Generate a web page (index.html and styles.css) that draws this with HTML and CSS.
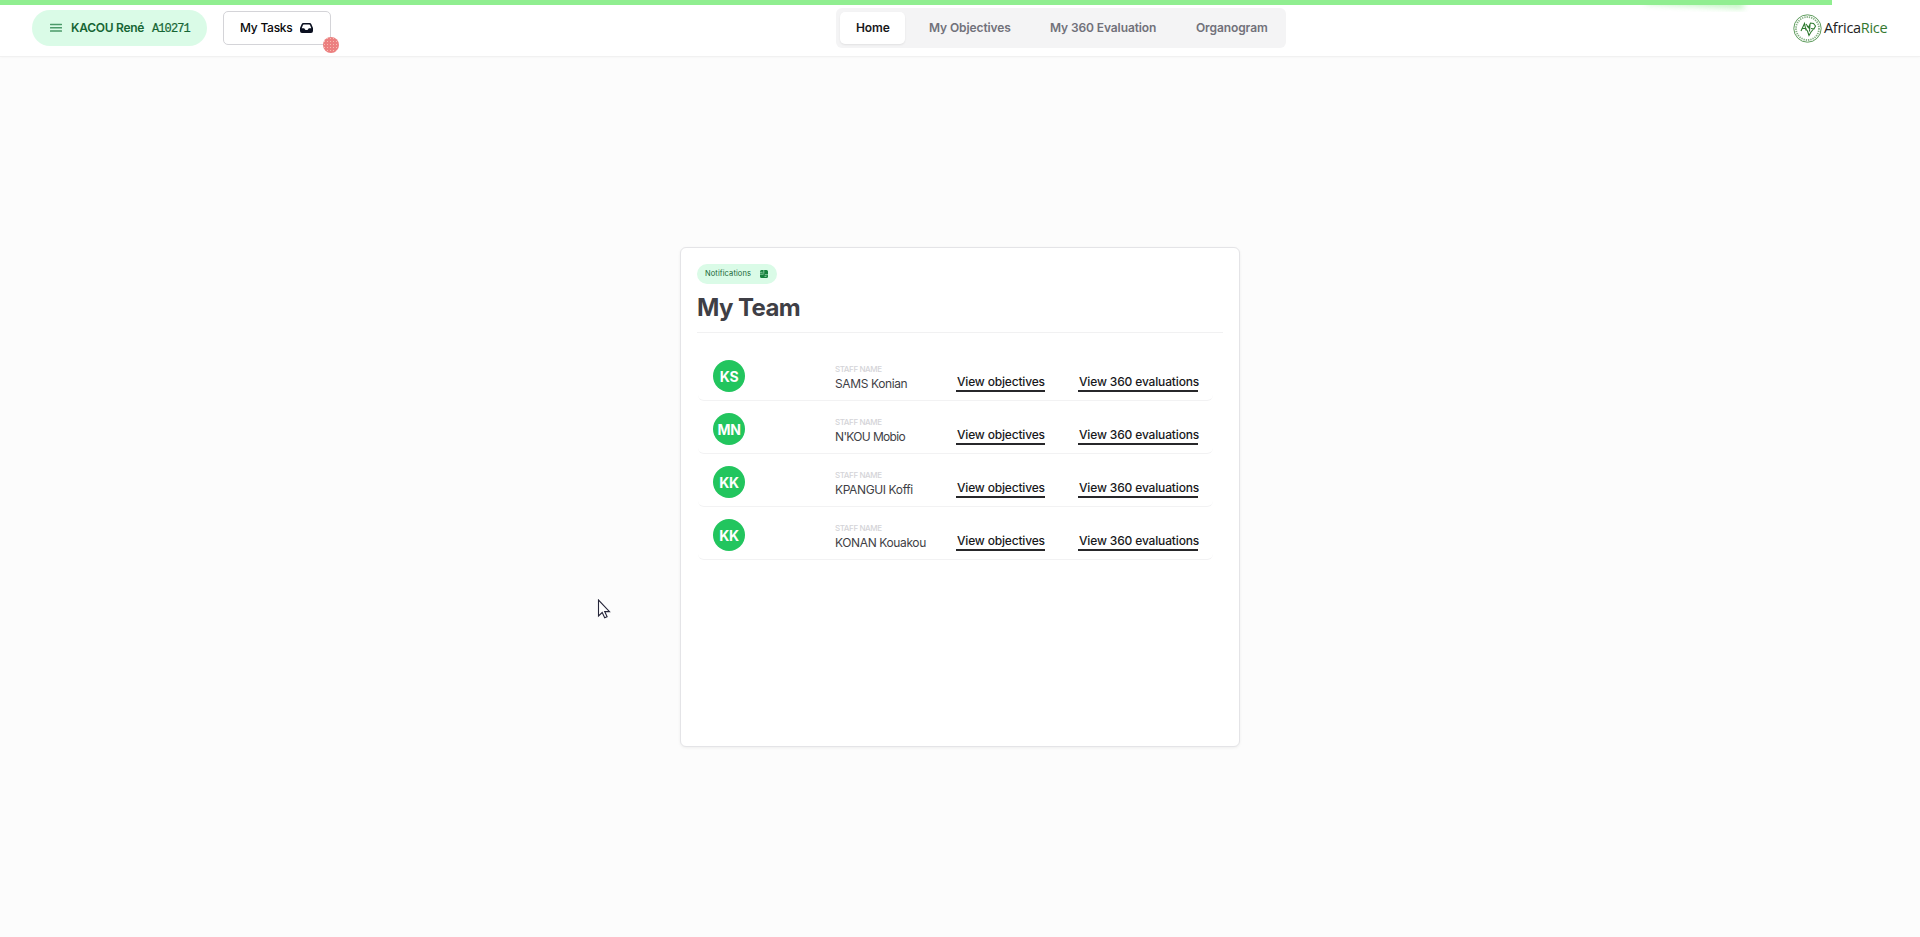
FILE: index.html
```html
<!DOCTYPE html>
<html lang="en">
<head>
<meta charset="utf-8">
<title>AfricaRice</title>
<link rel="stylesheet" href="styles.css">
</head>
<body>
<div class="progress"><div class="progress-bar"></div><div class="progress-peg"></div></div>
<header class="header">
  <div class="header-left">
    <button class="profile">
      <svg class="menu-icon" width="12" height="10" viewBox="0 0 12 10"><path d="M.5 1.500h11M.5 4.800h11M.5 8.100h11" stroke="#4b9a6a" stroke-width="1.500" stroke-linecap="round"/></svg>
      <span class="profile-name">KACOU René</span>
      <span class="profile-id">A10271</span>
    </button>
    <button class="tasks">
      <span class="tasks-label">My Tasks</span>
      <svg width="13" height="10" viewBox="0 0 13 10"><path fill="#0b1020" fill-rule="evenodd" d="M3.500 0h6a2 2 0 0 1 1.900 1.300L13 5v3a2 2 0 0 1-2 2H2a2 2 0 0 1-2-2V5l1.600-3.700A2 2 0 0 1 3.500 0Zm.2 1.400a.8.8 0 0 0-.7.500L1.700 5.200h2c.5 0 .8.200 1 .6l.3.700c.1.300.4.500.7.500h1.600c.3 0 .6-.2.700-.5l.3-.7c.2-.4.500-.6 1-.6h2L10 1.900a.8.8 0 0 0-.7-.5Z"/></svg>
      <span class="tasks-dot"></span>
    </button>
  </div>
  <nav class="tabs">
    <a class="tab tab-active">Home</a>
    <a class="tab tab-objectives">My Objectives</a>
    <a class="tab tab-evaluation">My 360 Evaluation</a>
    <a class="tab tab-organogram">Organogram</a>
  </nav>
  <div class="logo">
    <svg width="29" height="29" viewBox="0 0 29 29" fill="none">
      <circle cx="14.500" cy="14.500" r="13.700" stroke="#4c914b" stroke-width=".9"/>
      <circle cx="14.500" cy="14.500" r="11.500" stroke="#3f873e" stroke-width="1.800" stroke-dasharray="1.300 1" opacity=".65"/>
      <path d="M8 17l3.500-7.500 1.500 7M9.500 14.500h4M13 10l2.500 3.500 2-4.500 3 .5 2 2.500-1.500 3-3-.5M12 14l2.500 3 1.500 4.500 2-3.500 3-3.500M17 10.500l-.5 7M14 12l3 3" stroke="#2f7b30" stroke-width="1.100"/>
    </svg>
    <span class="logo-text">Africa<span class="logo-rice">Rice</span></span>
  </div>
</header>
<main class="main">
  <section class="card">
    <div class="badge">
      <span>Notifications</span>
      <svg width="8" height="8" viewBox="0 0 8 8"><path fill="#15803d" d="M1.500 0h5A1.500 1.500 0 0 1 8 1.500v5A1.500 1.500 0 0 1 6.500 8h-5A1.500 1.500 0 0 1 0 6.500v-5A1.500 1.500 0 0 1 1.500 0Z"/><path d="M0 2.300h2.500M3.800 0v3.600M0 4.200h3.600M4.800 4.700H8M4.500 6.400H6.500" stroke="#b5e8c6" stroke-width=".7" fill="none"/></svg>
    </div>
    <h1 class="title">My Team</h1>
    <ul class="team">
      <li class="member"><span class="avatar">KS</span><div class="staff"><span class="staff-label">STAFF NAME</span><span class="staff-name">SAMS Konian</span></div><a class="link link-objectives">View objectives</a><a class="link link-evaluations">View 360 evaluations</a></li>
      <li class="member"><span class="avatar">MN</span><div class="staff"><span class="staff-label">STAFF NAME</span><span class="staff-name name-tight">N'KOU Mobio</span></div><a class="link link-objectives">View objectives</a><a class="link link-evaluations">View 360 evaluations</a></li>
      <li class="member"><span class="avatar">KK</span><div class="staff"><span class="staff-label">STAFF NAME</span><span class="staff-name">KPANGUI Koffi</span></div><a class="link link-objectives">View objectives</a><a class="link link-evaluations">View 360 evaluations</a></li>
      <li class="member"><span class="avatar">KK</span><div class="staff"><span class="staff-label">STAFF NAME</span><span class="staff-name">KONAN Kouakou</span></div><a class="link link-objectives">View objectives</a><a class="link link-evaluations">View 360 evaluations</a></li>
    </ul>
  </section>
</main>
<svg class="cursor" width="14" height="21" viewBox="0 0 14 21"><path d="M1.500 1v16l3.700-3.500 2.500 5.300 2.400-1.100-2.400-5.100h4.800Z" fill="#fff" stroke="#26263a" stroke-width="1.100"/></svg>
</body>
</html>
```
FILE: styles.css
```css
* { box-sizing: border-box; }
body {
  margin: 0;
  height: 937px;
  overflow: hidden;
  background: #fcfcfc;
  font-family: Inter, "Liberation Sans", sans-serif;
  font-size: 12px;
  color: #18181b;
  white-space: nowrap;
}
button { font: inherit; margin: 0; }
svg { display: block; flex: none; }
.progress { position: absolute; inset: 0 0 auto; height: 12px; overflow: hidden; z-index: 2; }
.progress-bar { width: 1832px; height: 5px; background: #90ee90; }
.progress-peg { position: absolute; left: 1646px; top: -1px; width: 98px; height: 7px; background: #90ee90; filter: blur(3px); transform: rotate(3deg); opacity: .6; z-index: -1; }
.header {
  display: grid;
  grid-template-columns: 804px 450px 1fr;
  align-items: center;
  height: 57px;
  padding: 0 32px;
  background: #fff;
  border-bottom: 1px solid #f1f1f1;
  box-shadow: 0 1px 2px rgba(0, 0, 0, .025);
}
.header-left { display: flex; gap: 16px; align-items: center; }
.profile {
  display: flex;
  align-items: center;
  width: 175px;
  height: 36px;
  padding: 0 0 0 18px;
  border: 0;
  border-radius: 18px;
  background: #dafbe7;
  color: #166534;
}
.profile-name { width: 73px; margin: 0 8px 0 9px; padding-bottom: 1px; font-weight: 600; letter-spacing: -.27px; text-align: left; }
.profile-id { padding-top: 1px; font-family: "Liberation Mono", monospace; font-size: 12px; letter-spacing: -.9px; -webkit-text-stroke: .2px #166534; }
.tasks {
  position: relative;
  display: flex;
  align-items: center;
  gap: 8px;
  width: 108px;
  height: 34px;
  padding: 0 0 0 16px;
  border: 1px solid #d4d4d8;
  border-radius: 5px;
  background: #fff;
  color: #09090b;
}
.tasks-label { width: 52px; padding-bottom: 1px; text-align: left; font-weight: 500; letter-spacing: -.25px; }
.tasks-dot {
  position: absolute;
  right: -9px;
  bottom: -9px;
  width: 16px;
  height: 16px;
  border-radius: 50%;
  background: radial-gradient(circle, #f6bdb2 .7px, transparent 1px) 0 0 / 3px 3px #ec8080;
}
.tabs { display: flex; height: 40px; padding: 4px; border-radius: 6px; background: #f4f4f5; }
.tab {
  display: flex;
  align-items: center;
  height: 32px;
  padding: 0 0 1px 24px;
  font-weight: 600;
  letter-spacing: -.1px;
  color: #71717a;
}
.tab-active { width: 65px; padding-left: 16px; border-radius: 5px; background: #fff; color: #18181b; box-shadow: 0 1px 2px rgba(0, 0, 0, .08); }
.tab-objectives { width: 121px; }
.tab-evaluation { width: 146px; }
.logo { display: flex; align-items: center; gap: 2px; justify-self: end; width: 95px; }
.logo-text { font: 14.500px/20px "Open Sans", sans-serif; letter-spacing: -.3px; color: #222; }
.logo-rice { color: #34772f; }
.main { display: flex; justify-content: center; padding-top: 190px; }
.card {
  width: 560px;
  height: 500px;
  padding: 16px;
  border: 1px solid #e4e4e7;
  border-radius: 6px;
  background: #fff;
  box-shadow: 0 1px 3px rgba(0, 0, 0, .06);
}
.badge {
  display: flex;
  align-items: center;
  justify-content: space-between;
  width: 80px;
  height: 20px;
  padding: 0 9px 0 8px;
  border-radius: 10px;
  background: #dafbe7;
  color: #166534;
  font-size: 7.500px;
  letter-spacing: .1px;
}
.badge span { padding-bottom: 1px; }
.title { height: 49px; margin: 0; padding-top: 8px; border-bottom: 1px solid #f1f1f2; font-size: 24px; line-height: 32px; font-weight: 700; letter-spacing: -.6px; color: #3f3f46; }
.team { margin: 15px 0 0; padding: 0 10px 0 1px; list-style: none; }
.member {
  display: grid;
  grid-template-columns: 122px 122px 122px 1fr;
  align-items: start;
  height: 53px;
  padding: 12px 0 0 15px;
  border-bottom: 1px solid #f2f2f3;
  border-radius: 6px;
}
.avatar {
  display: grid;
  place-items: center;
  width: 32px;
  height: 32px;
  border-radius: 50%;
  background: #22c55e;
  color: #fff;
  font-size: 14px;
  font-weight: 700;
  letter-spacing: -.3px;
}
.staff { display: flex; flex-direction: column; padding-top: 5px; }
.staff-label { font-size: 8px; line-height: 9px; letter-spacing: -.42px; color: #d4d4d8; font-weight: 500; }
.staff-name { margin-top: 2px; line-height: 16px; letter-spacing: -.38px; color: #3f3f46; }
.name-tight { letter-spacing: -.65px; }
.link { height: 18px; margin: 14px 0 0 -1px; line-height: 16px; border-bottom: 2px solid #27272a; font-weight: 500; padding-left: 1px; }
.link-objectives { width: 89px; letter-spacing: -.18px; }
.link-evaluations { width: 120px; letter-spacing: -.15px; }
.cursor { position: absolute; left: 597px; top: 599px; }
```
